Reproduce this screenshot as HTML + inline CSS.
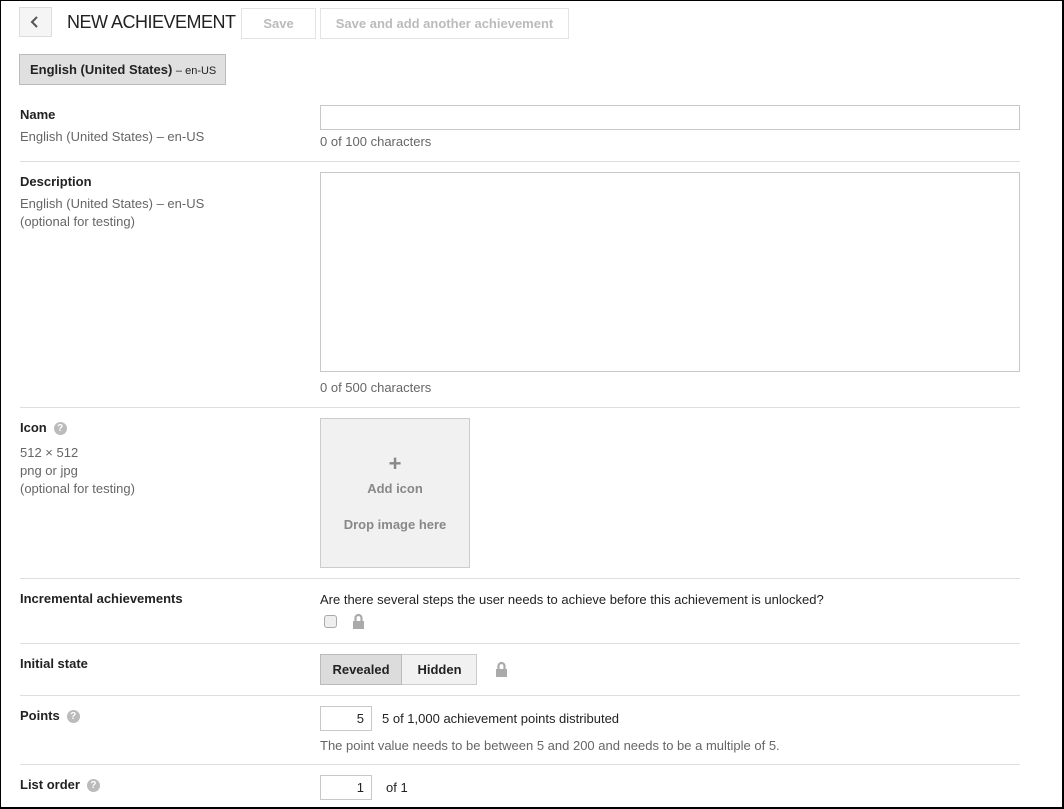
<!DOCTYPE html>
<html><head><style>
*{box-sizing:border-box;margin:0;padding:0}
body{width:1064px;height:809px;position:relative;background:#fff;font-family:"Liberation Sans",Arial,sans-serif;font-size:13px;color:#222;overflow:hidden}
#frame{position:absolute;left:0;top:0;width:1064px;height:809px;border:1px solid #000;border-bottom-width:2px;border-right-width:2px;pointer-events:none}
.a{position:absolute;white-space:nowrap}
.lbl{font-weight:bold;color:#222}
.sub{color:#666;line-height:18px}
.hr{position:absolute;left:20px;width:1000px;height:1px;background:#ddd}
.box{position:absolute;border:1px solid #c8c8c8;background:#fff}
.q{display:inline-block;width:13px;height:13px;border-radius:50%;background:#bbb;color:#fff;font-size:10px;font-weight:bold;text-align:center;line-height:13px;margin-left:7px;vertical-align:1px}
.lock{position:absolute;width:13px;height:16px}
</style></head><body>
<div class="box" style="left:19px;top:7px;width:33px;height:30px;background:#f5f5f5;border-color:#ddd"></div>
<svg class="a" style="left:29px;top:15px" width="12" height="14"><path d="M8 2 L3 7 L8 12" stroke="#555" stroke-width="2" fill="none"/></svg>
<div class="a" style="left:67px;top:12px;font-size:18px;color:#222;letter-spacing:-0.5px">NEW ACHIEVEMENT</div>
<div class="box" style="left:241px;top:8px;width:75px;height:31px;border-color:#e3e3e3;color:#bbb;font-weight:bold;text-align:center;line-height:29px">Save</div>
<div class="box" style="left:320px;top:8px;width:249px;height:31px;border-color:#e3e3e3;color:#bbb;font-weight:bold;text-align:center;line-height:29px">Save and add another achievement</div>
<div class="box" style="left:19px;top:54px;width:207px;height:31px;background:#e0e0e0;border-color:#bbb;line-height:29px;padding-left:10px;font-weight:bold">English (United States) <span style="font-weight:normal;font-size:11px">– en-US</span></div>

<div class="a lbl" style="left:20px;top:107px">Name</div>
<div class="a sub" style="left:20px;top:128px">English (United States) – en-US</div>
<div class="box" style="left:320px;top:105px;width:700px;height:25px"></div>
<div class="a sub" style="left:320px;top:133px">0 of 100 characters</div>
<div class="hr" style="top:161px"></div>

<div class="a lbl" style="left:20px;top:174px">Description</div>
<div class="a sub" style="left:20px;top:195px">English (United States) – en-US<br>(optional for testing)</div>
<div class="box" style="left:320px;top:172px;width:700px;height:200px"></div>
<div class="a sub" style="left:320px;top:379px">0 of 500 characters</div>
<div class="hr" style="top:407px"></div>

<div class="a lbl" style="left:20px;top:420px">Icon<span class="q">?</span></div>
<div class="a sub" style="left:20px;top:444px">512 × 512<br>png or jpg<br>(optional for testing)</div>
<div class="box" style="left:320px;top:418px;width:150px;height:150px;background:#f1f1f1;border-color:#ccc;text-align:center;color:#888;font-weight:bold">
<div style="font-size:22px;margin-top:34px;line-height:22px">+</div>
<div style="margin-top:6px">Add icon</div>
<div style="margin-top:21px">Drop image here</div></div>
<div class="hr" style="top:578px"></div>

<div class="a lbl" style="left:20px;top:591px">Incremental achievements</div>
<div class="a" style="left:320px;top:592px">Are there several steps the user needs to achieve before this achievement is unlocked?</div>
<div class="box" style="left:324px;top:615px;width:13px;height:13px;border-radius:3px;border-color:#aaa;background:#eee"></div>
<svg class="lock" style="left:352px;top:613px"><path d="M3.5 8 V5 A3 3 0 0 1 9.5 5 V8" stroke="#aaa" stroke-width="2.2" fill="none"/><rect x="1" y="8" width="11" height="8" fill="#aaa"/></svg>
<div class="hr" style="top:643px"></div>

<div class="a lbl" style="left:20px;top:656px">Initial state</div>
<div class="box" style="left:320px;top:654px;width:157px;height:31px;background:#f1f1f1;border-color:#ccc"></div>
<div class="a" style="left:320px;top:654px;width:82px;height:31px;background:#dcdcdc;border:1px solid #bbb;font-weight:bold;text-align:center;line-height:29px">Revealed</div>
<div class="a" style="left:402px;top:654px;width:75px;height:31px;font-weight:bold;text-align:center;line-height:31px">Hidden</div>
<svg class="lock" style="left:495px;top:661px"><path d="M3.5 8 V5 A3 3 0 0 1 9.5 5 V8" stroke="#aaa" stroke-width="2.2" fill="none"/><rect x="1" y="8" width="11" height="8" fill="#aaa"/></svg>
<div class="hr" style="top:695px"></div>

<div class="a lbl" style="left:20px;top:708px">Points<span class="q">?</span></div>
<div class="box" style="left:320px;top:706px;width:52px;height:25px;text-align:right;padding-right:7px;line-height:24px">5</div>
<div class="a" style="left:382px;top:711px">5 of 1,000 achievement points distributed</div>
<div class="a sub" style="left:320px;top:737px">The point value needs to be between 5 and 200 and needs to be a multiple of 5.</div>
<div class="hr" style="top:764px"></div>

<div class="a lbl" style="left:20px;top:777px">List order<span class="q">?</span></div>
<div class="box" style="left:320px;top:775px;width:52px;height:25px;text-align:right;padding-right:7px;line-height:24px">1</div>
<div class="a" style="left:386px;top:780px">of 1</div>
<div id="frame"></div>
</body></html>
